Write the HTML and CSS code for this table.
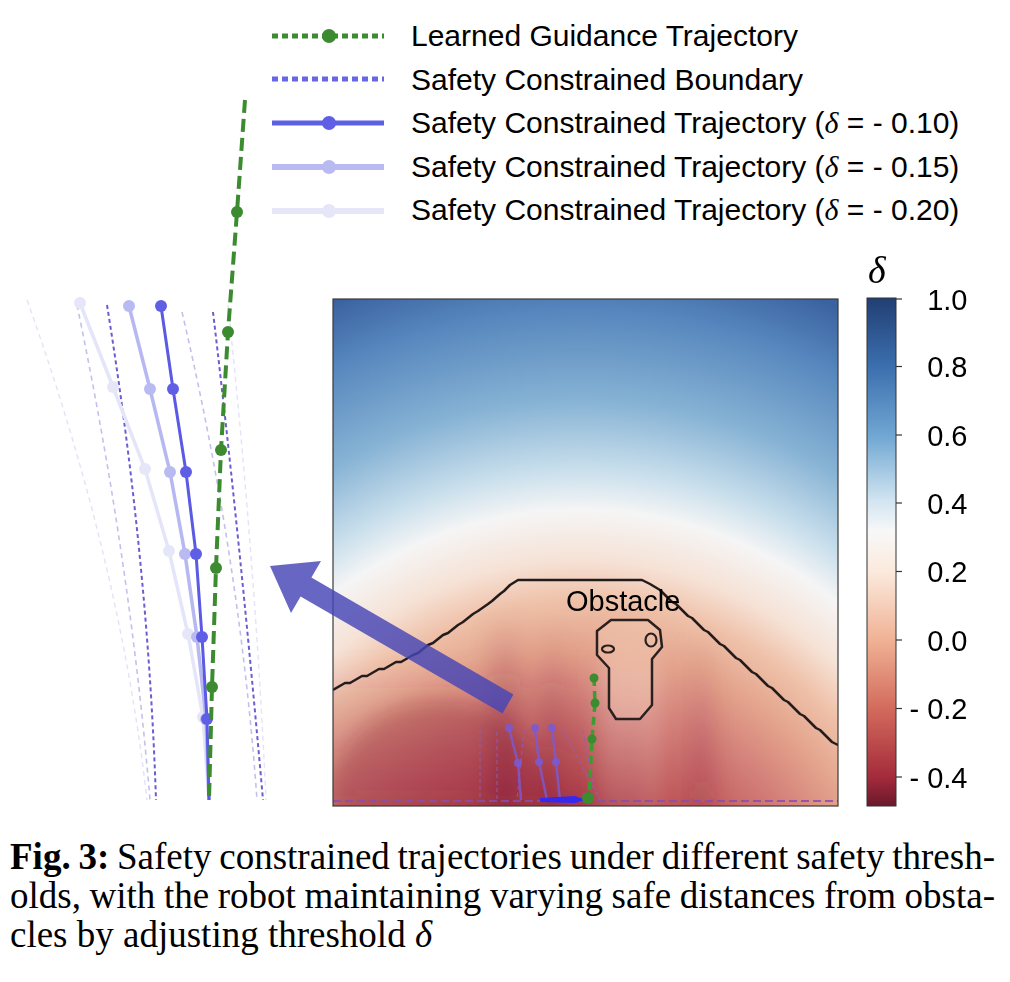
FILE: index.html
```html
<!DOCTYPE html>
<html lang="en">
<head>
<meta charset="utf-8">
<title>Fig. 3</title>
<link rel="stylesheet" href="styles.css">
</head>
<body>
<div class="page">
<figure class="figure">
<svg class="plot" width="1010" height="837" viewBox="0 0 1010 837" xmlns="http://www.w3.org/2000/svg">
  <defs>
    <radialGradient id="heat" gradientUnits="userSpaceOnUse" cx="580" cy="1000" r="750" gradientTransform="translate(580 1000) scale(0.9 1) translate(-580 -1000)">
      <stop offset="0.259" stop-color="#b0444e"/>
      <stop offset="0.293" stop-color="#bd5357"/>
      <stop offset="0.40" stop-color="#d4817a"/>
      <stop offset="0.467" stop-color="#e3a28b"/>
      <stop offset="0.533" stop-color="#efc1a9"/>
      <stop offset="0.587" stop-color="#f6e2d6"/>
      <stop offset="0.653" stop-color="#f5f5f5"/>
      <stop offset="0.707" stop-color="#c9dfec"/>
      <stop offset="0.80" stop-color="#86b2d4"/>
      <stop offset="0.92" stop-color="#5686bd"/>
      <stop offset="1" stop-color="#3b62a0"/>
    </radialGradient>
    <linearGradient id="cbar" x1="0" y1="0" x2="0" y2="1">
      <stop offset="0" stop-color="#213f73"/>
      <stop offset="0.135" stop-color="#3b6fae"/>
      <stop offset="0.27" stop-color="#6fa6d2"/>
      <stop offset="0.40" stop-color="#d2e5f1"/>
      <stop offset="0.46" stop-color="#f8f8f8"/>
      <stop offset="0.54" stop-color="#fbe9dc"/>
      <stop offset="0.673" stop-color="#f0b295"/>
      <stop offset="0.808" stop-color="#d36b5d"/>
      <stop offset="0.943" stop-color="#a42b3b"/>
      <stop offset="1" stop-color="#6a182b"/>
    </linearGradient>
    <linearGradient id="streak" x1="0" y1="0" x2="0" y2="1">
      <stop offset="0" stop-color="#7a1a35" stop-opacity="0"/>
      <stop offset="0.5" stop-color="#7a1a35" stop-opacity="0.25"/>
      <stop offset="1" stop-color="#7a1a35" stop-opacity="0.4"/>
    </linearGradient>
    <linearGradient id="bottomdark" x1="0" y1="0" x2="0" y2="1">
      <stop offset="0" stop-color="#9a2a40" stop-opacity="0"/>
      <stop offset="1" stop-color="#9a2a40" stop-opacity="0.45"/>
    </linearGradient>
    <linearGradient id="light" x1="0" y1="0" x2="0" y2="1">
      <stop offset="0" stop-color="#f8dccb" stop-opacity="0"/>
      <stop offset="0.3" stop-color="#f8dccb" stop-opacity="0.4"/>
      <stop offset="1" stop-color="#f8dccb" stop-opacity="0.15"/>
    </linearGradient>
    <filter id="soft" x="-50%" y="-50%" width="200%" height="200%">
      <feGaussianBlur stdDeviation="10"/>
    </filter>
    <clipPath id="heatclip">
      <rect x="333" y="299" width="505" height="507"/>
    </clipPath>
  </defs>

  <!-- legend -->
  <g class="legend">
    <line class="lg-green" x1="272" y1="36" x2="384" y2="36"/>
    <circle class="dot-green" cx="329" cy="36" r="7"/>
    <line class="lg-bound" x1="272" y1="79" x2="384" y2="79"/>
    <line class="lg-t1" x1="272" y1="123" x2="384" y2="123"/>
    <circle class="dot-t1" cx="329" cy="123" r="7"/>
    <line class="lg-t2" x1="272" y1="167" x2="384" y2="167"/>
    <circle class="dot-t2" cx="329" cy="167" r="7"/>
    <line class="lg-t3" x1="272" y1="211" x2="384" y2="211"/>
    <circle class="dot-t3" cx="329" cy="211" r="7"/>
    <text class="lg-text" x="411" y="46">Learned Guidance Trajectory</text>
    <text class="lg-text" x="411" y="89.5">Safety Constrained Boundary</text>
    <text class="lg-text" x="411" y="133">Safety Constrained Trajectory (<tspan class="delta">δ</tspan> = - 0.10)</text>
    <text class="lg-text" x="411" y="176.5">Safety Constrained Trajectory (<tspan class="delta">δ</tspan> = - 0.15)</text>
    <text class="lg-text" x="411" y="220">Safety Constrained Trajectory (<tspan class="delta">δ</tspan> = - 0.20)</text>
  </g>

  <!-- zoomed trajectories on the left -->
  <g class="zoomed">
    <path class="bd-faint2" d="M27,300 Q120,560 147,800"/>
    <path class="bd-faint" d="M77,305 Q130,560 150,800"/>
    <path class="bd-faint" d="M182,312 Q240,560 257,800"/>
    <path class="bd-faint2" d="M228,305 Q255,560 266,800"/>
    <path class="bd-dark" d="M107,305 Q148,560 156,800"/>
    <path class="bd-dark" d="M213,312 Q240,540 263,800"/>

    <polyline class="tr-t3" points="80,303 113,387 145,469 169,551 188,634 203,717 209,800"/>
    <g class="dot-t3">
      <circle cx="80" cy="303" r="6"/><circle cx="113" cy="387" r="6"/><circle cx="145" cy="469" r="6"/>
      <circle cx="169" cy="551" r="6"/><circle cx="188" cy="634" r="6"/><circle cx="203" cy="717" r="6"/>
    </g>
    <polyline class="tr-t2" points="129,306 150,389 170,472 185,554 197,637 206,719 209,800"/>
    <g class="dot-t2">
      <circle cx="129" cy="306" r="6"/><circle cx="150" cy="389" r="6"/><circle cx="170" cy="472" r="6"/>
      <circle cx="185" cy="554" r="6"/><circle cx="197" cy="637" r="6"/><circle cx="206" cy="719" r="6"/>
    </g>
    <polyline class="tr-t1" points="161,306 173,389 186,472 196,554 202,637 207,719 209,800"/>
    <g class="dot-t1">
      <circle cx="161" cy="306" r="6"/><circle cx="173" cy="389" r="6"/><circle cx="186" cy="472" r="6"/>
      <circle cx="196" cy="554" r="6"/><circle cx="202" cy="637" r="6"/><circle cx="207" cy="719" r="6"/>
    </g>
    <path class="tr-green" d="M245,100 L237,212 L228,332 L221,450 L216,568 L212,687 L209,800"/>
    <g class="dot-green">
      <circle cx="237" cy="212" r="6"/><circle cx="228" cy="332" r="6"/><circle cx="221" cy="450" r="6"/>
      <circle cx="216" cy="568" r="6"/><circle cx="212" cy="687" r="6"/>
    </g>
  </g>

  <!-- heatmap -->
  <g clip-path="url(#heatclip)">
    <rect x="333" y="299" width="505" height="507" fill="url(#heat)"/>
    <g filter="url(#soft)">
      <rect x="310" y="660" width="340" height="170" fill="url(#bottomdark)"/>
      <ellipse cx="440" cy="800" rx="110" ry="100" fill="#8e2038" opacity="0.3"/>
      <rect x="488" y="610" width="32" height="220" fill="url(#streak)"/>
      <rect x="540" y="620" width="24" height="210" fill="url(#streak)" opacity="0.7"/>
      <rect x="690" y="630" width="24" height="200" fill="url(#streak)" opacity="0.55"/>
      <rect x="600" y="620" width="60" height="200" fill="url(#light)"/>
    </g>

    <!-- boundary contour -->
    <path class="contour" d="M333,690 L345,683 L350,683 L362,676 L367,676 L379,669 L384,669 L396,662 L401,662 L413,655 L418,653 L428,645 L433,643 L443,635 L448,633 L458,625 L463,622 L473,614 L478,611 L488,604 L492,601 L500,594 L504,591 L510,585 L518,580 L642,580 L650,584 L660,590 L672,602 L676,604 L688,616 L692,618 L704,630 L708,632 L720,644 L724,646 L736,658 L740,660 L752,672 L756,674 L768,686 L772,688 L784,700 L788,702 L800,714 L804,716 L816,728 L820,730 L832,742 L836,744 L842,747"/>

    <!-- obstacle -->
    <path class="obstacle" d="M611,620 L648,620 L660,630 L662,647 L652,659 L652,705 L640,719 L616,719 L609,708 L609,668 L597,655 L597,631 Z"/>
    <ellipse class="eye" cx="608" cy="649" rx="6" ry="3.5"/>
    <ellipse class="eye" cx="651" cy="640" rx="5.5" ry="6.5"/>
    <text class="obst-text" x="566" y="611">Obstacle</text>

    <!-- small trajectories -->
    <line class="hm-bottom" x1="333" y1="801" x2="838" y2="801"/>
    <g class="hm-dash">
      <line x1="480" y1="730" x2="480" y2="800"/>
      <line x1="497" y1="732" x2="497" y2="800"/>
      <line x1="524" y1="730" x2="517" y2="800"/>
      <line x1="563" y1="730" x2="600" y2="800"/>
      <line x1="583" y1="730" x2="594" y2="790"/>
    </g>
    <g class="hm-traj">
      <polyline points="509,728 518,763 521,800"/>
      <polyline points="535,728 539,762 547,800"/>
      <polyline points="552,728 556,762 560,800"/>
    </g>
    <g class="hm-traj-dot">
      <circle cx="509" cy="728" r="4"/><circle cx="518" cy="763" r="4"/>
      <circle cx="535" cy="728" r="4"/><circle cx="539" cy="762" r="4"/>
      <circle cx="552" cy="728" r="4"/><circle cx="556" cy="762" r="4"/>
    </g>
    <path class="hm-blue" d="M540,798 L575,796 L586,800 L575,803 L540,802 Z"/>
    <path class="hm-green" d="M594,678 L595,703 L592,739 L589,800"/>
    <g class="dot-green">
      <circle cx="594" cy="678" r="4.5"/><circle cx="595" cy="703" r="4.5"/>
      <circle cx="592" cy="739" r="4.5"/><circle cx="588" cy="798" r="6"/>
    </g>
  </g>
  <rect class="frame" x="333" y="299" width="505" height="507"/>

  <!-- arrow -->
  <polygon class="arrow" points="270,566 321,561 311.4,577.4 513.4,694.4 502.6,713.6 300.6,596.6 291,613"/>

  <!-- colorbar -->
  <text class="cb-delta" x="868" y="283">δ</text>
  <rect class="cbar" x="867" y="298" width="29" height="508" fill="url(#cbar)"/>
  <g class="cb-ticks">
    <line x1="896" y1="299" x2="902" y2="299"/>
    <line x1="896" y1="366.5" x2="902" y2="366.5"/>
    <line x1="896" y1="435" x2="902" y2="435"/>
    <line x1="896" y1="503" x2="902" y2="503"/>
    <line x1="896" y1="571.5" x2="902" y2="571.5"/>
    <line x1="896" y1="640" x2="902" y2="640"/>
    <line x1="896" y1="708.5" x2="902" y2="708.5"/>
    <line x1="896" y1="777" x2="902" y2="777"/>
  </g>
  <g class="cb-labels">
    <text x="967.5" y="309.5">1.0</text>
    <text x="967.5" y="377">0.8</text>
    <text x="967.5" y="445.5">0.6</text>
    <text x="967.5" y="513.5">0.4</text>
    <text x="967.5" y="582">0.2</text>
    <text x="967.5" y="650.5">0.0</text>
    <text x="967.5" y="719">- 0.2</text>
    <text x="967.5" y="787.5">- 0.4</text>
  </g>
</svg>
</figure>
<p class="caption">
  <span class="line"><b>Fig. 3:</b> Safety constrained trajectories under different safety thresh-</span>
  <span class="line">olds, with the robot maintaining varying safe distances from obsta-</span>
  <span class="line last">cles by adjusting threshold <i>δ</i></span>
</p>
</div>
</body>
</html>
```

FILE: styles.css
```css
html, body {
  margin: 0;
  padding: 0;
  background: #ffffff;
}

.page {
  width: 1010px;
  height: 982px;
  overflow: hidden;
}

.figure {
  margin: 0;
}

.plot {
  display: block;
}

/* legend */
.lg-text {
  font-family: "Liberation Sans", Arial, sans-serif;
  font-size: 30px;
  fill: #000;
}
.delta {
  font-family: "Liberation Serif", "Times New Roman", serif;
  font-style: italic;
}
.lg-green { stroke: #3d8b31; stroke-width: 5; stroke-dasharray: 6 4; }
.lg-bound { stroke: #6767e6; stroke-width: 5; stroke-dasharray: 6 4; }
.lg-t1 { stroke: #5f5fe6; stroke-width: 5; }
.lg-t2 { stroke: #babaf3; stroke-width: 6; }
.lg-t3 { stroke: #e6e6f9; stroke-width: 6; }

.dot-green { fill: #3d8b31; }
.dot-t1 { fill: #5f5fe6; }
.dot-t2 { fill: #babaf3; }
.dot-t3 { fill: #e6e6f9; }

/* zoomed trajectories */
.bd-dark { fill: none; stroke: #6b5ecf; stroke-width: 2; stroke-dasharray: 4 3; }
.bd-faint { fill: none; stroke: #c4c0ee; stroke-width: 1.6; stroke-dasharray: 5 4; }
.bd-faint2 { fill: none; stroke: #e4e2f7; stroke-width: 1.4; stroke-dasharray: 5 4; }
.tr-t1 { fill: none; stroke: #5a5ae4; stroke-width: 3; }
.tr-t2 { fill: none; stroke: #b7b7f2; stroke-width: 3.5; }
.tr-t3 { fill: none; stroke: #e5e5f9; stroke-width: 3.5; }
.tr-green { fill: none; stroke: #3d8b31; stroke-width: 4; stroke-dasharray: 13 6; }

/* heatmap */
.contour { fill: none; stroke: #231c1c; stroke-width: 2.5; stroke-linejoin: round; }
.obstacle { fill: #f3cab5; fill-opacity: 0.35; stroke: #2a2020; stroke-width: 2.5; stroke-linejoin: round; }
.eye { fill: none; stroke: #2a2020; stroke-width: 2.2; }
.obst-text {
  font-family: "Liberation Sans", Arial, sans-serif;
  font-size: 29px;
  fill: #000;
}
.hm-bottom { stroke: #8a4db0; stroke-width: 2; stroke-dasharray: 8 4; opacity: 0.85; }
.hm-dash line { stroke: #8a62cc; stroke-width: 1.3; stroke-dasharray: 4 3; opacity: 0.65; }
.hm-traj polyline { fill: none; stroke: #7a5ad6; stroke-width: 2.5; opacity: 0.8; }
.hm-traj-dot { fill: #7a5ad6; opacity: 0.85; }
.hm-blue { fill: #2828ff; opacity: 0.9; }
.hm-green { fill: none; stroke: #3d9b31; stroke-width: 3.5; stroke-dasharray: 8 5; }
.frame { fill: none; stroke: #3a3a3a; stroke-width: 1.2; }

.arrow { fill: #4646b6; fill-opacity: 0.82; }

/* colorbar */
.cbar { stroke: #333; stroke-width: 1; }
.cb-ticks line { stroke: #333; stroke-width: 1.2; }
.cb-labels text {
  font-family: "Liberation Sans", Arial, sans-serif;
  font-size: 29px;
  fill: #000;
  text-anchor: end;
}
.cb-delta {
  font-family: "Liberation Serif", "Times New Roman", serif;
  font-style: italic;
  font-size: 38px;
  fill: #000;
}

/* caption */
.caption {
  margin: 0;
  padding: 0 15px 0 10px;
  font-family: "Liberation Serif", "Times New Roman", serif;
  font-size: 37px;
  line-height: 39px;
  word-spacing: -2px;
  color: #000;
}
.caption .line {
  display: block;
  text-align: justify;
  text-align-last: justify;
  white-space: nowrap;
}
.caption .line.last {
  text-align-last: left;
  word-spacing: 0;
}
.caption b {
  font-weight: bold;
}
```
